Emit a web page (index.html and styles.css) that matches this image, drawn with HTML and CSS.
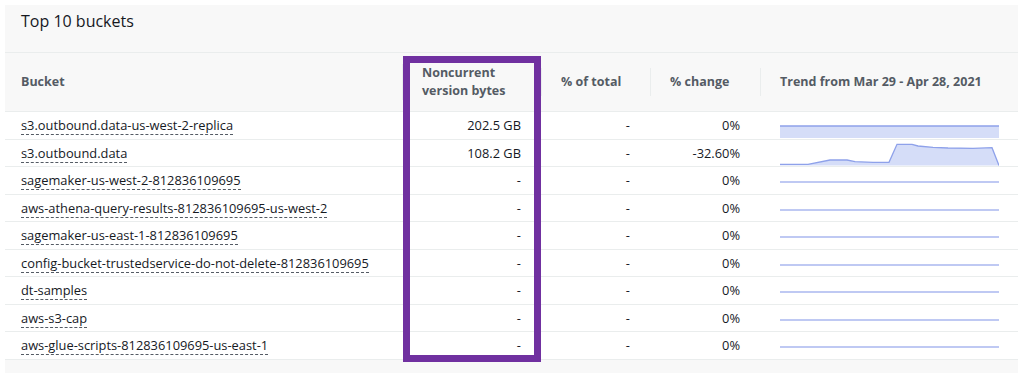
FILE: index.html
```html
<!DOCTYPE html>
<html lang="en">
<head>
  <meta charset="UTF-8" />
  <title>Top 10 buckets</title>
  <link rel="stylesheet" href="styles.css">
</head>
<body>
  <div class="panel">
    <div class="panel-header">
      <h2>Top 10 buckets</h2>
    </div>

    <div class="grid head">
      <div class="th first">Bucket</div>
      <div class="th">Noncurrent<br>version bytes</div>
      <div class="th">% of total</div>
      <div class="th">% change</div>
      <div class="th">Trend from Mar 29 - Apr 28, 2021</div>
    </div>

    <div class="rows">
      <div class="grid row">
        <div class="td first"><a href="#">s3.outbound.data-us-west-2-replica</a></div>
        <div class="td num">202.5 GB</div>
        <div class="td num">-</div>
        <div class="td num">0%</div>
        <div class="td trend">
          <svg width="219" height="27" viewBox="0 0 219 27">
            <rect class="area" x="0" y="14" width="219" height="12" />
            <polyline class="line" points="0,14 219,14" />
          </svg>
        </div>
      </div>
      <div class="grid row">
        <div class="td first"><a href="#">s3.outbound.data</a></div>
        <div class="td num">108.2 GB</div>
        <div class="td num">-</div>
        <div class="td num">-32.60%</div>
        <div class="td trend">
          <svg width="219" height="27" viewBox="0 0 219 27">
            <polygon class="area" points="0,24.3 28,24.3 50,20 67,20 75,21.7 93,22.3 109,22.3 117,4.3 132,4.3 138,6 153,7.3 168,8 193,8.3 212,7.7 219,25.5 0,25.5" />
            <polyline class="line" points="0,24.3 28,24.3 50,20 67,20 75,21.7 93,22.3 109,22.3 117,4.3 132,4.3 138,6 153,7.3 168,8 193,8.3 212,7.7 219,25.5" />
          </svg>
        </div>
      </div>
      <div class="grid row">
        <div class="td first"><a href="#">sagemaker-us-west-2-812836109695</a></div>
        <div class="td num">-</div>
        <div class="td num">-</div>
        <div class="td num">0%</div>
        <div class="td trend"><svg width="219" height="27" viewBox="0 0 219 27"><polyline class="flat" points="0,15 219,15" /></svg></div>
      </div>
      <div class="grid row">
        <div class="td first"><a href="#">aws-athena-query-results-812836109695-us-west-2</a></div>
        <div class="td num">-</div>
        <div class="td num">-</div>
        <div class="td num">0%</div>
        <div class="td trend"><svg width="219" height="27" viewBox="0 0 219 27"><polyline class="flat" points="0,15 219,15" /></svg></div>
      </div>
      <div class="grid row">
        <div class="td first"><a href="#">sagemaker-us-east-1-812836109695</a></div>
        <div class="td num">-</div>
        <div class="td num">-</div>
        <div class="td num">0%</div>
        <div class="td trend"><svg width="219" height="27" viewBox="0 0 219 27"><polyline class="flat" points="0,15 219,15" /></svg></div>
      </div>
      <div class="grid row">
        <div class="td first"><a href="#">config-bucket-trustedservice-do-not-delete-812836109695</a></div>
        <div class="td num">-</div>
        <div class="td num">-</div>
        <div class="td num">0%</div>
        <div class="td trend"><svg width="219" height="27" viewBox="0 0 219 27"><polyline class="flat" points="0,15 219,15" /></svg></div>
      </div>
      <div class="grid row">
        <div class="td first"><a href="#">dt-samples</a></div>
        <div class="td num">-</div>
        <div class="td num">-</div>
        <div class="td num">0%</div>
        <div class="td trend"><svg width="219" height="27" viewBox="0 0 219 27"><polyline class="flat" points="0,15 219,15" /></svg></div>
      </div>
      <div class="grid row">
        <div class="td first"><a href="#">aws-s3-cap</a></div>
        <div class="td num">-</div>
        <div class="td num">-</div>
        <div class="td num">0%</div>
        <div class="td trend"><svg width="219" height="27" viewBox="0 0 219 27"><polyline class="flat" points="0,15 219,15" /></svg></div>
      </div>
      <div class="grid row">
        <div class="td first"><a href="#">aws-glue-scripts-812836109695-us-east-1</a></div>
        <div class="td num">-</div>
        <div class="td num">-</div>
        <div class="td num">0%</div>
        <div class="td trend"><svg width="219" height="27" viewBox="0 0 219 27"><polyline class="flat" points="0,15 219,15" /></svg></div>
      </div>
    </div>
    <div class="panel-footer"></div>

    <!-- highlight annotation -->
    <div class="highlight"></div>
  </div>
</body>
</html>
```

FILE: styles.css
```css
:root {
  --text: #16191f;
  --muted: #545b64;
  --line: #eaeded;
  --panel: #f8f8f8;
  --purple: #7030a0;
  --chart-line: #8ea1ea;
  --chart-fill: #d5ddf8;
}
* {
  box-sizing: border-box;
}
body {
  margin: 0;
  background: #fff;
  font-family: 'Open Sans', sans-serif;
  font-size: 12.85px;
  color: var(--text);
}
.panel {
  position: relative;
  margin: 5px 6px 0 5px;
  background: var(--panel);
}
.panel-header {
  height: 48px;
  padding: 5px 16px 0;
  border-bottom: 1px solid var(--line);
}
.panel-header h2 {
  margin: 0;
  font-size: 16px;
  font-weight: 400;
  color: var(--text);
}
.grid {
  display: grid;
  grid-template-columns: 397px 139px 109px 110px 1fr;
}
.head {
  height: 59px;
  align-items: center;
  border-bottom: 1px solid var(--line);
}
.th {
  font-size: 12.5px;
  font-weight: 700;
  color: var(--muted);
  line-height: 18px;
  padding-left: 19px;
  border-left: 1px solid var(--line);
  margin: 0;
}
.th.first {
  padding-left: 16px;
  border-left: none;
}
.head .th:not(.first) {
  min-height: 28px;
  display: flex;
  align-items: center;
}
.rows {
  background: #fff;
}
.row {
  height: 27.56px;
  align-items: center;
  border-bottom: 1px solid var(--line);
}
.td {
  padding: 0 20px 1px 19px;
}
.td.first {
  padding-left: 16px;
}
.td.num {
  text-align: right;
}
.td a {
  color: var(--text);
  text-decoration: none;
  border-bottom: 1px dashed var(--muted);
}
.td.trend {
  padding: 0 19px 0 20px;
}
.td.trend svg {
  display: block;
}
.area {
  fill: var(--chart-fill);
  stroke: none;
}
.line {
  fill: none;
  stroke: var(--chart-line);
  stroke-width: 1.3;
}
.flat {
  fill: none;
  stroke: #aab7ef;
  stroke-width: 1.3;
}
.panel-footer {
  height: 13px;
}
.highlight {
  position: absolute;
  left: 398px;
  top: 51px;
  width: 138px;
  height: 306px;
  border: 7px solid var(--purple);
}
```
